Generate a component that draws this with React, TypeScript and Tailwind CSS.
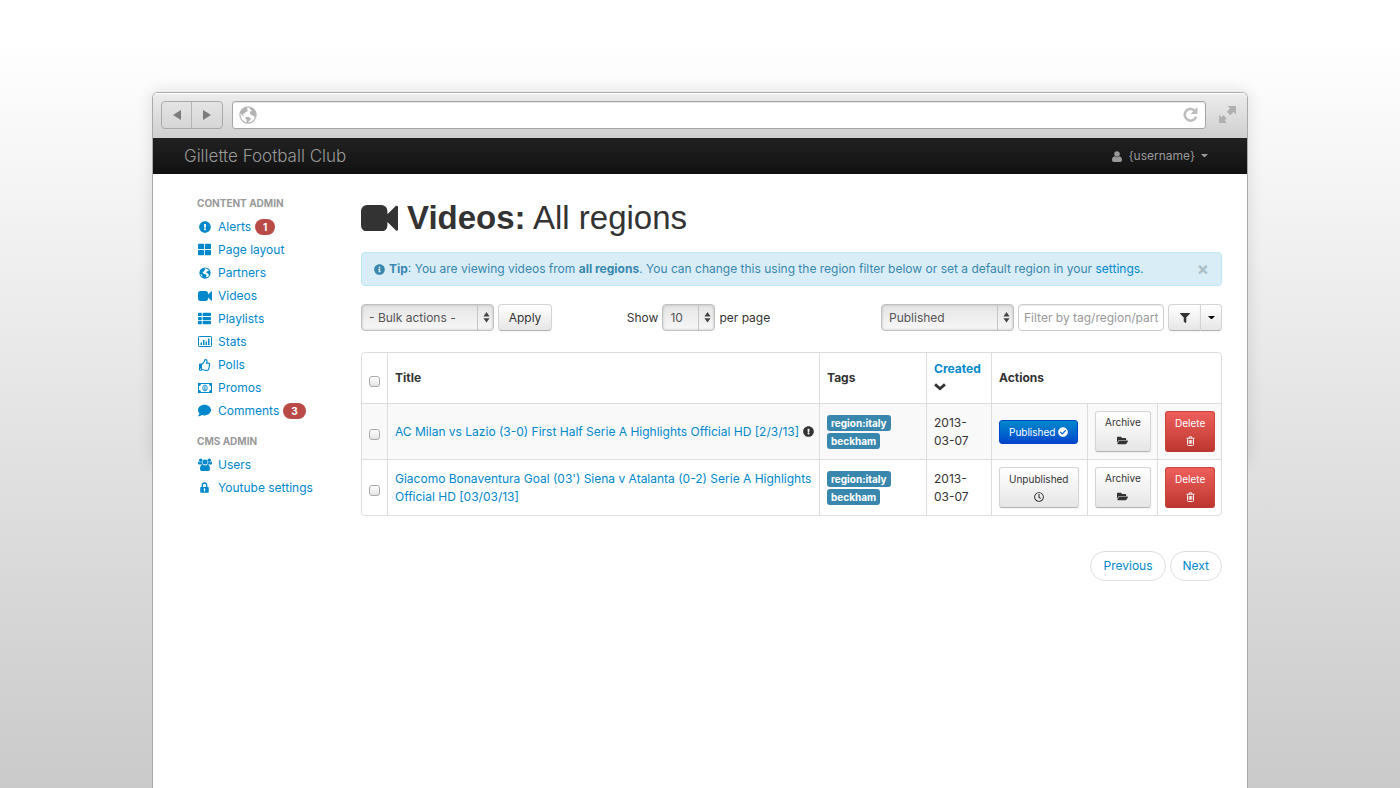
import { useState } from "react";
import type { ReactNode, SelectHTMLAttributes } from "react";
import {
  FaCheckCircle, FaComment, FaExclamationCircle, FaFilter, FaFolderOpen,
  FaInfoCircle, FaRegClock, FaRegThumbsUp, FaThLarge, FaThList,
} from "react-icons/fa";
import { clsx } from "clsx";

interface Video {
  id: number;
  title: string;
  flagged?: boolean;
  tags: string[];
  created: string;
  published: boolean;
}

const VIDEOS: Video[] = [
  { id: 1, title: "AC Milan vs Lazio (3-0) First Half Serie A Highlights Official HD [2/3/13]", flagged: true, tags: ["region:italy", "beckham"], created: "2013-03-07", published: true },
  { id: 2, title: "Giacomo Bonaventura Goal (03') Siena v Atalanta (0-2) Serie A Highlights Official HD [03/03/13]", tags: ["region:italy", "beckham"], created: "2013-03-07", published: false },
];

function VideoIcon({ className }: { className?: string }) {
  return (
    <svg viewBox="0 256 1792 1280" fill="currentColor" className={className} aria-hidden="true">
      <path d="M1792 352v1088q0 42-39 59-13 5-25 5-27 0-45-19l-403-403v166q0 119-84.5 203.5t-203.5 84.5h-704q-119 0-203.5-84.5t-84.5-203.5v-704q0-119 84.5-203.5t203.5-84.5h704q119 0 203.5 84.5t84.5 203.5v165l403-402q18-19 45-19 12 0 25 5 39 17 39 59z" />
    </svg>
  );
}

function GlobeIcon({ className }: { className?: string }) {
  return (
    <svg viewBox="0 0 16 16" className={className} aria-hidden="true">
      <circle cx="8" cy="8" r="7.2" fill="none" stroke="currentColor" strokeWidth="1" />
      <path fill="currentColor" d="M2 3.6 4 1.9 6.8 1l1 1.1-1 .7 1.1.8-.5 1.3-1.5.5-.8 1.4-1-.2-.9 1 1.6.9-.4.5L2.6 8 1 6.4zM10 1.2l3 1.6 1.7 3.1.2 2.9-1 1.6-1.1-2-1.6-.2-1.7-1.7.7-1.9 1.6-.7L10 3l-.8-.9zM6 9.5l2.6.3 2 1.2-.5 1.5-1.3.8-.8 1.9-1-.2-.3-2.7L5.6 11z" />
    </svg>
  );
}

// Solid globe used in the sidebar
function SolidGlobeIcon({ className }: { className?: string }) {
  return (
    <svg viewBox="0 0 16 16" className={className} aria-hidden="true">
      <circle cx="8" cy="8" r="7.5" fill="currentColor" />
      <path fill="#fff" d="M8.2 1.6 11 2.5l2.3 2.1-1.2 1.1-1.6-.2-.9 1.4.7 1.2 1.9.4.3 1.4 1.2.5-1.4 2.4-2.3 1.1-.4-1.6.6-1.4-1.7-1.3-2.3-.7-1.5-1.7.3-.9 1.2.4.2-1.6 1.5-.9.4-1.2L7 2.7zM2.2 9.2l1.7 1.2.7 1.9-.5.6L2.4 11z" />
    </svg>
  );
}

function BarChartIcon({ className }: { className?: string }) {
  return (
    <svg viewBox="0 0 28 22" className={className} aria-hidden="true">
      <rect x="1" y="1" width="26" height="20" rx="1.5" fill="none" stroke="currentColor" strokeWidth="2" />
      <path fill="currentColor" d="M5 13h3v5H5zM10 8h3v10h-3zM15 11h3v7h-3zM20 5h3v13h-3z" />
    </svg>
  );
}

function MoneyIcon({ className }: { className?: string }) {
  return (
    <svg viewBox="0 0 28 20" className={className} aria-hidden="true">
      <path fill="currentColor" fillRule="evenodd" d="M0 0h28v20H0zM6 2q0 4-4 4v8q4 0 4 4h16q0-4 4-4V6q-4 0-4-4z" />
      <ellipse cx="14" cy="10" rx="4.500" ry="6" fill="none" stroke="currentColor" strokeWidth="1.800" />
      <path fill="currentColor" d="M12 8l1.800-1.600H15V12h1v1.500h-4V12h1V8.800z" />
    </svg>
  );
}

function LockIcon({ className }: { className?: string }) {
  return (
    <svg viewBox="0 0 18 22" className={className} aria-hidden="true">
      <path d="M4.500 11V6.500a4.500 4.500 0 0 1 9 0V11" fill="none" stroke="currentColor" strokeWidth="2.600" />
      <path fill="currentColor" fillRule="evenodd" d="M2 10h14q1.500 0 1.500 1.500v8.500q0 1.500-1.500 1.500H2Q.5 21.500.5 20v-8.500Q.5 10 2 10zm7 2.500a1.800 1.800 0 0 0-1 3.300V19h2v-3.200a1.800 1.800 0 0 0-1-3.300z" />
    </svg>
  );
}

function UsersIcon({ className }: { className?: string }) {
  return (
    <svg viewBox="0 0 28 26" fill="currentColor" className={className} aria-hidden="true">
      <circle cx="5.500" cy="4.500" r="3.500" />
      <circle cx="22.500" cy="4.500" r="3.500" />
      <circle cx="14" cy="8" r="5" />
      <path d="M0 9q0-2 1.500-2Q4.500 9.500 8 8.300q0 3 2 4.700H2.500Q0 13 0 11zM28 9q0-2-1.500-2-3 2.500-6.500 1.300 0 3-2 4.700h7.500Q28 13 28 11zM9 13q5 4 10 0 5 1 5 9 0 4-3.500 4h-13Q4 26 4 22q0-8 5-9z" />
    </svg>
  );
}

function UserIcon({ className }: { className?: string }) {
  return (
    <svg viewBox="0 0 20 22" fill="currentColor" className={className} aria-hidden="true">
      <circle cx="10" cy="6" r="5.500" />
      <path d="M5.500 10.500q4.500 3.500 9 0Q20 11.500 20 18q0 4-3.500 4h-13Q0 22 0 18q0-6.500 5.500-7.500z" />
    </svg>
  );
}

function ChevronIcon({ className }: { className?: string }) {
  return (
    <svg viewBox="0 0 22 14" fill="none" stroke="currentColor" strokeWidth="5" className={className} aria-hidden="true">
      <path d="M2 2.500l9 8 9-8" />
    </svg>
  );
}

function TrashIcon({ className }: { className?: string }) {
  return (
    <svg viewBox="0 0 18 20" fill="none" stroke="currentColor" strokeWidth="1.800" className={className} aria-hidden="true">
      <path d="M1 4.500h16M6 4.500 7 1.500h4l1 3M3 4.500V17q0 2 2 2h8q2 0 2-2V4.500M6.500 8v7.500M9 8v7.500M11.500 8v7.500" />
    </svg>
  );
}

function ReloadIcon({ className }: { className?: string }) {
  return (
    <svg viewBox="0 0 16 16" className={className} aria-hidden="true">
      <path d="M11.500 4A5.500 5.500 0 1 0 13.300 10" fill="none" stroke="currentColor" strokeWidth="2.400" />
      <path d="M14.500 1v6.500H8z" fill="currentColor" />
    </svg>
  );
}

function ExpandIcon({ className }: { className?: string }) {
  return (
    <svg viewBox="0 0 18 18" fill="currentColor" className={className} aria-hidden="true">
      <path d="M9 1h8v8l-2.400-2.400-3 3-3.200-3.200 3-3zM8.500 17H1V9.500l2.200 2.200 2-2 3.100 3.100-2 2z" />
    </svg>
  );
}

interface NavItem {
  label: string;
  icon: ReactNode;
  badge?: number;
}

const CONTENT_ITEMS: NavItem[] = [
  { label: "Alerts", icon: <FaExclamationCircle className="size-[12px]" />, badge: 1 },
  { label: "Page layout", icon: <FaThLarge className="size-[13px]" /> },
  { label: "Partners", icon: <SolidGlobeIcon className="size-[12px]" /> },
  { label: "Videos", icon: <VideoIcon className="w-[14px]" /> },
  { label: "Playlists", icon: <FaThList className="size-[13px]" /> },
  { label: "Stats", icon: <BarChartIcon className="w-[14px]" /> },
  { label: "Polls", icon: <FaRegThumbsUp className="size-[12px]" /> },
  { label: "Promos", icon: <MoneyIcon className="w-[14px]" /> },
  { label: "Comments", icon: <FaComment className="size-[13px]" />, badge: 3 },
];

const CMS_ITEMS: NavItem[] = [
  { label: "Users", icon: <UsersIcon className="w-[14px]" /> },
  { label: "Youtube settings", icon: <LockIcon className="h-[11px]" /> },
];

function NavSection({ title, items }: { title: string; items: NavItem[] }) {
  return (
    <section>
      <h2 className="mb-px text-[10px] leading-[22px] font-bold text-[#999] uppercase">{title}</h2>
      <ul>
        {items.map(item => (
          <li key={item.label}>
            <a href="#" className="flex h-[23px] items-center text-[#0088cc] hover:underline">
              <span className="mr-1.5 flex w-[15px] justify-center">{item.icon}</span>
              {item.label}
              {item.badge && (
                <span className="ml-1 rounded-full bg-[#b94a48] px-2 text-[10px] leading-4 font-bold text-white">{item.badge}</span>
              )}
            </a>
          </li>
        ))}
      </ul>
    </section>
  );
}

function Select({ className, children, ...props }: SelectHTMLAttributes<HTMLSelectElement>) {
  return (
    <span className={clsx("relative inline-flex h-[27px]", className)}>
      <select
        {...props}
        className="w-full appearance-none rounded-[4px] border border-[#c0c0c0] bg-linear-to-b from-[#e4e4e4] to-[#f8f8f8] pr-5 pl-[7px] text-[#555] shadow-[inset_0_0_3px_rgba(0,0,0,0.2)]"
      >
        {children}
      </select>
      <span className="pointer-events-none absolute inset-y-px right-0 flex w-[17px] items-center justify-center border-l border-[#c4c4c4]">
        <svg viewBox="0 0 8 12" className="w-[7px] text-[#444]" fill="currentColor" aria-hidden="true">
          <path d="M4 0l3.500 5h-7zM4 12l3.500-5h-7z" />
        </svg>
      </span>
    </span>
  );
}

const buttonBase = "border border-[#d4d4d4] border-b-[#b3b3b3] bg-linear-to-b from-white to-[#e6e6e6] text-[#333] shadow-[0_1px_2px_rgba(0,0,0,0.05)]";
const smallButton = "rounded-[3px] text-[10px] leading-[18px]";

function Checkbox({ label }: { label: string }) {
  return (
    <input
      type="checkbox"
      aria-label={label}
      className="mx-auto mt-1.5 block size-[11px] appearance-none rounded-[3px] border border-[#aaa] bg-linear-to-b from-white to-[#e4e4e4] checked:bg-[#0088cc]"
    />
  );
}

function VideoRow({ video, striped }: { video: Video; striped: boolean }) {
  const cell = "h-14 border-t border-l border-[#ddd] pl-[7px] first:border-l-0 first:pl-0";
  return (
    <tr className={clsx(striped && "bg-[#f9f9f9]")}>
      <td className={cell}><Checkbox label={`Select ${video.title}`} /></td>
      <td className={clsx(cell, "pr-1")}>
        <a href="#" className="text-[#0088cc] hover:underline">{video.title}</a>
        {video.flagged && <FaExclamationCircle className="ml-1 inline size-[11px] align-[-1px]" />}
      </td>
      <td className={clsx(cell, "pr-[7px]")}>
        <div className="flex flex-col items-start gap-0.5">
          {video.tags.map(tag => (
            <span key={tag} className="rounded-[3px] bg-[#3a87ad] px-1 text-[10px] leading-4 font-bold text-white">{tag}</span>
          ))}
        </div>
      </td>
      <td className={clsx(cell, "pr-[7px]")}>{video.created}</td>
      <td className={cell}>
        {video.published ? (
          <button className={clsx(smallButton, "flex h-6 items-center gap-[3px] border border-[#0044cc] bg-linear-to-b from-[#0088cc] to-[#0044cc] px-[9px] text-white")}>
            Published <FaCheckCircle className="size-[10px]" />
          </button>
        ) : (
          <button className={clsx(buttonBase, smallButton, "h-[41px] px-[9px]")}>
            Unpublished
            <FaRegClock className="mx-auto my-1 block size-[10px]" />
          </button>
        )}
      </td>
      <td className={cell}>
        <button className={clsx(buttonBase, smallButton, "h-[41px] px-[9px]")}>
          Archive
          <FaFolderOpen className="mx-auto my-1 block size-[11px]" />
        </button>
      </td>
      <td className={cell}>
        <button className={clsx(smallButton, "h-[41px] border border-[#c9433d] border-b-[#bd362f] bg-linear-to-b from-[#ee5f5b] to-[#bd362f] px-[9px] text-white")}>
          Delete
          <TrashIcon className="mx-auto my-1 block h-[10px]" />
        </button>
      </td>
    </tr>
  );
}

function VideoTable() {
  const head = "h-[50px] border-l border-[#ddd] px-[7px] text-left font-bold first:border-l-0 first:px-0";
  return (
    <table className="w-full table-fixed border-separate border-spacing-0 rounded-[4px] border border-[#ddd] leading-[18px]">
      <colgroup>
        <col className="w-[25px]" />
        <col />
        <col className="w-[107px]" />
        <col className="w-[65px]" />
        <col className="w-[96px]" />
        <col className="w-[70px]" />
        <col className="w-[64px]" />
      </colgroup>
      <thead>
        <tr>
          <th className={head}><Checkbox label="Select all videos" /></th>
          <th className={head}>Title</th>
          <th className={head}>Tags</th>
          <th className={head}>
            <a href="#" className="block text-[#0088cc]">Created</a>
            <ChevronIcon className="my-[5px] w-[12px]" />
          </th>
          <th className={head} colSpan={3}>Actions</th>
        </tr>
      </thead>
      <tbody>
        {VIDEOS.map((video, i) => <VideoRow key={video.id} video={video} striped={i % 2 === 0} />)}
      </tbody>
    </table>
  );
}

function BrowserBar() {
  return (
    <div className="flex h-[45px] items-center rounded-t-[5px] border-t border-white bg-linear-to-b from-[#ececec] to-[#cfcfcf] px-2 pb-[3px]">
      <div className="flex h-7 overflow-hidden rounded-[4px] border border-[#aaa] bg-linear-to-b from-[#e4e4e4] to-[#d6d6d6] text-[#7c7c7c]">
        <button aria-label="Back" className="flex w-[30px] items-center justify-center border-r border-[#b4b4b4]">
          <svg viewBox="0 0 8 10" className="h-[10px]" fill="currentColor"><path d="M8 0v10L0 5z" /></svg>
        </button>
        <button aria-label="Forward" className="flex w-[30px] items-center justify-center">
          <svg viewBox="0 0 8 10" className="h-[10px]" fill="currentColor"><path d="M0 0v10l8-5z" /></svg>
        </button>
      </div>
      <div className="ml-[9px] flex h-7 flex-1 items-center rounded-[3px] border border-[#a6a6a6] bg-white px-1.5 shadow-[inset_0_1px_1px_rgba(0,0,0,0.1)]">
        <GlobeIcon className="size-[18px] text-[#b3b3b3]" />
        <input aria-label="Address" className="mx-2 min-w-0 flex-1 outline-none" />
        <button aria-label="Reload"><ReloadIcon className="size-[17px] text-[#bdbdbd]" /></button>
      </div>
      <button aria-label="Full screen" className="mr-[2px] ml-3"><ExpandIcon className="size-[19px] text-[#b0b0b0]" /></button>
    </div>
  );
}

export default function App() {
  const [showTip, setShowTip] = useState(true);

  return (
    <div className="flex min-h-screen flex-col bg-linear-to-b from-white from-5% to-[#cacaca] px-4 pt-[92px] font-[Inter,'Liberation_Sans',sans-serif] text-[12px] leading-[18px] text-[#333]">
      <div className="relative mx-auto flex w-full max-w-[1096px] flex-1 flex-col">
        {/* the window's shadow only falls on its upper half */}
        <div className="absolute inset-x-0 top-0 h-[370px] rounded-t-[6px] shadow-[0_0_16px_rgba(0,0,0,0.12)]" />
        <div className="relative flex flex-1 flex-col rounded-t-[6px] border border-b-0 border-[#aaa] bg-white">
          <BrowserBar />

          <header className="flex h-9 items-center justify-between bg-linear-to-b from-[#222] to-[#111] pr-[39px] pl-[31px] text-[#999]">
            <a href="#" className="text-[17px] font-light">Gillette Football Club</a>
            <button className="flex items-center">
              <UserIcon className="mr-1.5 h-[11px]" />
              {"{username}"}
              <svg viewBox="0 0 8 4" className="ml-1.5 w-[7px]" fill="currentColor"><path d="M0 0h8L4 4z" /></svg>
            </button>
          </header>

          <div className="flex flex-1 pt-[18px] pr-[25px] pl-11">
            <nav className="flex w-[164px] shrink-0 flex-col gap-2">
              <NavSection title="Content admin" items={CONTENT_ITEMS} />
              <NavSection title="CMS admin" items={CMS_ITEMS} />
            </nav>

            <main className="min-w-0 flex-1">
              <h1 className="mt-1.5 flex items-center gap-[9px] font-['Liberation_Sans',Arial,sans-serif] text-[33px] leading-10">
                <VideoIcon className="w-[37px]" />
                <span><strong>Videos:</strong> All regions</span>
              </h1>

              {showTip && (
                <div className="mt-[14px] flex h-[34px] items-center rounded-[4px] border border-[#bce8f1] bg-[#d9edf7] px-3 text-[#3a87ad]">
                  <FaInfoCircle className="mr-1 size-[11px]" />
                  <p className="flex-1">
                    <strong>Tip</strong>: You are viewing videos from <strong>all regions</strong>. You can change this using the region filter below or set a default region in your <a href="#" className="text-[#0088cc]">settings.</a>
                  </p>
                  <button aria-label="Dismiss tip" onClick={() => setShowTip(false)} className="text-[18px] font-bold text-[#adbec6]">×</button>
                </div>
              )}

              <div className="mt-[18px] flex items-center">
                <div className="flex gap-1">
                  <Select aria-label="Bulk actions" className="w-[133px]">
                    <option>- Bulk actions -</option>
                    <option>Archive</option>
                    <option>Delete</option>
                  </Select>
                  <button className={clsx(buttonBase, "h-[27px] w-[54px] rounded-[4px]")}>Apply</button>
                </div>
                <label className="flex flex-1 items-center justify-center gap-1 pr-9">
                  Show
                  <Select className="w-[53px]">
                    <option>10</option>
                    <option>25</option>
                    <option>50</option>
                  </Select>
                  per page
                </label>
                <div className="flex gap-1">
                  <Select aria-label="Status" className="w-[133px]">
                    <option>Published</option>
                    <option>Unpublished</option>
                  </Select>
                  <input
                    type="text"
                    aria-label="Filter videos"
                    placeholder="Filter by tag/region/part"
                    className="h-[27px] w-[146px] rounded-[4px] border border-[#ccc] px-[5px] shadow-[inset_0_1px_1px_rgba(0,0,0,0.075)] placeholder:text-[#999]"
                  />
                  <div className="flex">
                    <button aria-label="Filter" className={clsx(buttonBase, "flex h-[27px] w-8 items-center justify-center rounded-l-[4px] border-r-0")}>
                      <FaFilter className="size-[10px]" />
                    </button>
                    <button aria-label="Filter options" className={clsx(buttonBase, "flex h-[27px] w-[22px] items-center justify-center rounded-r-[4px]")}>
                      <svg viewBox="0 0 8 4" className="w-[7px] text-black" fill="currentColor"><path d="M0 0h8L4 4z" /></svg>
                    </button>
                  </div>
                </div>
              </div>

              <div className="mt-[21px]">
                <VideoTable />
              </div>

              <div className="mt-[35px] flex justify-end gap-1">
                <a href="#" className="rounded-full border border-[#ddd] px-3 py-[5px] text-[#0088cc]">Previous</a>
                <a href="#" className="rounded-full border border-[#ddd] px-3 py-[5px] text-[#0088cc]">Next</a>
              </div>
            </main>
          </div>
        </div>
      </div>
    </div>
  );
}
